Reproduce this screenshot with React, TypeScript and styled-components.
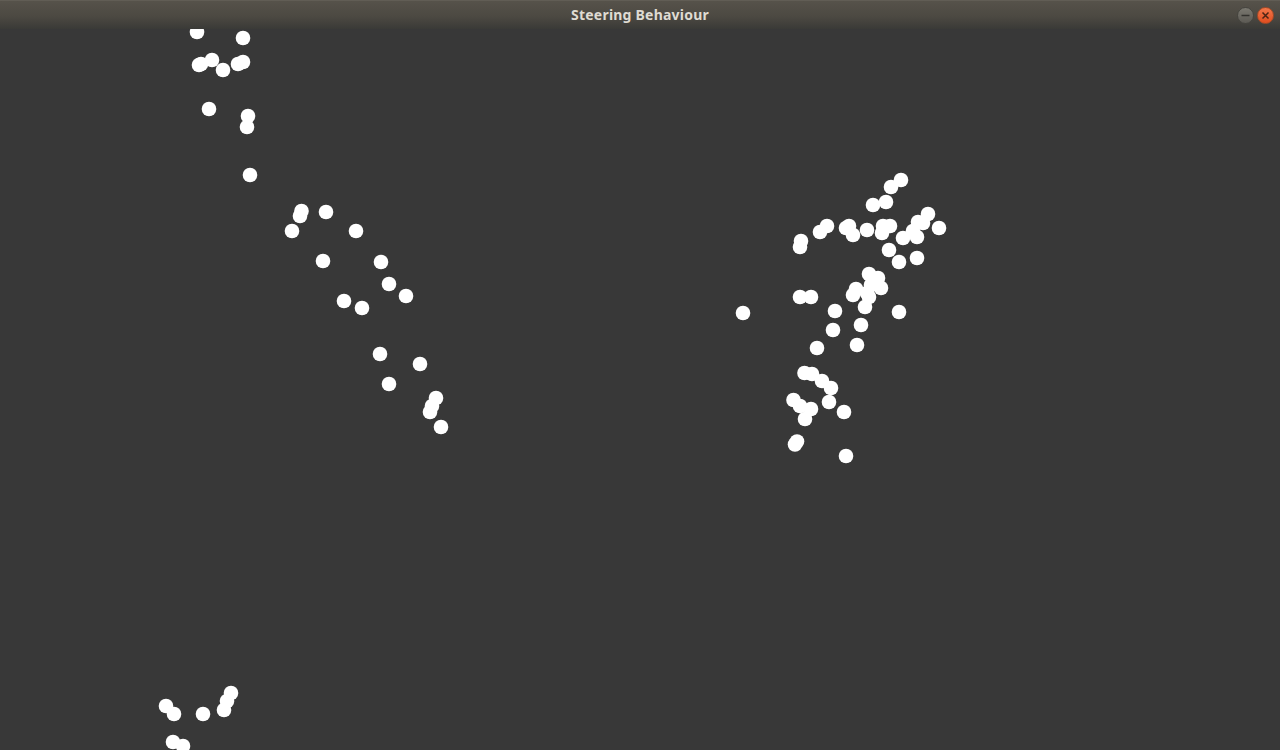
import styled, { createGlobalStyle } from "styled-components";

const GlobalStyle = createGlobalStyle`
  html, body {
    margin: 0;
    padding: 0;
    height: 100%;
    overflow: hidden;
    background: #383838;
  }
`;

const Window = styled.div`
  display: flex;
  flex-direction: column;
  width: 1280px;
  height: 750px;
`;

const TitleBar = styled.header`
  position: relative;
  display: flex;
  flex: 0 0 29px;
  align-items: center;
  justify-content: center;
  padding-bottom: 2px;
  border-top: 1px solid #615d55;
  box-sizing: border-box;
  background: linear-gradient(#56524a, #4c4942 55%, #3a3a37);
`;

const Title = styled.span`
  font-family: "Noto Sans", "DejaVu Sans", sans-serif;
  font-size: 14px;
  font-weight: 700;
  letter-spacing: 0.22px;
  color: #dfdbd2;
`;

const WindowButtons = styled.div`
  position: absolute;
  top: 6px;
  right: 6px;
  display: flex;
  gap: 3px;
`;

const WindowButton = styled.button<{ $close?: boolean }>`
  display: flex;
  align-items: center;
  justify-content: center;
  box-sizing: border-box;
  width: 17px;
  height: 17px;
  padding: 0;
  border: 1px solid ${({ $close }) => ($close ? "#a84a26" : "#45443f")};
  border-radius: 50%;
  background: ${({ $close }) =>
    $close
      ? "linear-gradient(#f2774a, #df4d1f)"
      : "linear-gradient(#7a7870, #5c5a54)"};
`;

const Canvas = styled.svg`
  display: block;
  flex: 1;
  width: 1280px;
  background: #383838;
`;

const Dot = styled.circle`
  fill: #ffffff;
`;

// boid positions in page coordinates, the viewBox starts under the title bar
const boids: [number, number][] = [
  [197, 32], [243, 38], [199, 65], [201, 64], [212, 60], [223, 70], [238, 64], [243, 62],
  [209, 109], [248, 116], [247, 127], [250, 175],
  [301.5, 211], [300, 216], [326, 212], [292, 231], [356, 231], [323, 261], [381, 262],
  [389, 284], [406, 296], [344, 301], [362, 308], [380, 354], [420, 364], [389, 384],
  [436, 398], [432, 406], [430, 412], [441, 427],
  [231, 693], [227, 701], [224, 710], [166, 706], [174, 714], [203, 714], [173, 742], [183, 746],
  [901, 180], [891, 187], [886, 202], [873, 205], [928, 214], [939, 228], [918, 222],
  [923, 223], [913, 231], [917, 237], [903, 238], [890, 226], [883, 226], [882, 233],
  [867, 230], [853, 235], [849, 226], [846, 228], [827, 226], [820, 232], [801, 241],
  [800, 247], [889, 250], [899, 262], [917, 258],
  [869, 274], [878, 278], [881, 288], [871, 285], [856, 289], [853, 295], [867, 293], [869, 297],
  [865, 307], [800, 297], [811, 297], [743, 313], [835, 311], [899, 312], [861, 325],
  [833, 330], [857, 345], [817, 348], [804.5, 373], [812, 374], [822, 381], [831, 388],
  [793.5, 400], [800, 406], [811, 409], [805, 419], [829, 402], [844, 412], [797, 441.5],
  [795, 444.5], [846, 456],
];

const App = () => {
  return (
    <Window>
      <GlobalStyle />
      <TitleBar>
        <Title>Steering Behaviour</Title>
        <WindowButtons>
          <WindowButton aria-label="Minimize">
            <svg width="11" height="11" viewBox="0 0 11 11">
              <path d="M1.5 5.5H9.5" stroke="#33322e" strokeWidth="1.5" />
            </svg>
          </WindowButton>
          <WindowButton $close aria-label="Close">
            <svg width="11" height="11" viewBox="0 0 11 11">
              <path d="M2.5 2.5L8.5 8.5M8.5 2.5L2.5 8.5" stroke="#4a2415" strokeWidth="1.5" />
            </svg>
          </WindowButton>
        </WindowButtons>
      </TitleBar>
      <Canvas viewBox="0 29 1280 721">
        {boids.map(([x, y], i) => (
          <Dot key={i} cx={x} cy={y} r={7.3} />
        ))}
      </Canvas>
    </Window>
  );
};

export default App;
